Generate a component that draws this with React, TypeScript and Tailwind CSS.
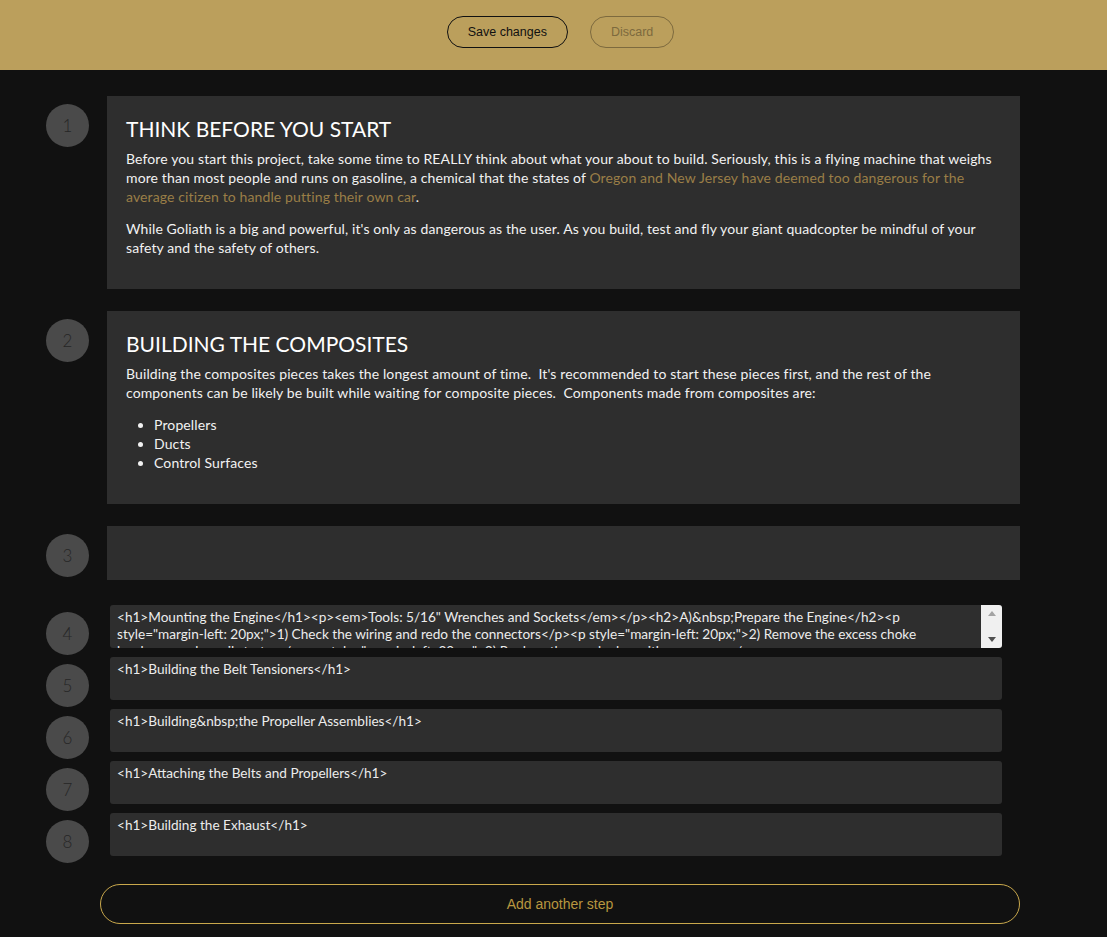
import React from 'react';

const font = { fontFamily: 'Lato, "Noto Sans", sans-serif' };

function Circle({ n }: { n: number }) {
  return (
    <div className="flex h-[43px] w-[43px] shrink-0 items-center justify-center rounded-full bg-[#4a4a4a] text-[17px] font-light text-[#262626]">
      {n}
    </div>
  );
}

function CardRow({ n, children, empty }: { n: number; children?: React.ReactNode; empty?: boolean }) {
  return (
    <div className="flex items-start gap-[18px]">
      <div className="mt-2">
        <Circle n={n} />
      </div>
      <div
        className={
          empty
            ? 'h-[54px] flex-1 bg-[#2e2e2e]'
            : 'flex-1 bg-[#2e2e2e] px-[19px] pt-[19px] pb-[32px] text-[14px] leading-[19px] tracking-[0.12px] text-[#f2f2f2]'
        }
      >
        {children}
      </div>
    </div>
  );
}

function StepRow({ n, text, scroll }: { n: number; text: string; scroll?: boolean }) {
  return (
    <div className="flex h-[43px] items-start gap-[21px] pr-[18px]">
      <div className="mt-[7px]">
        <Circle n={n} />
      </div>
      <div className="flex h-[43px] flex-1 overflow-hidden rounded-[3px] bg-[#2e2e2e]">
        <div className="flex-1 overflow-hidden px-[7px] pt-[4px] text-[13.6px] leading-[17px] text-[#ececec]">
          {text}
        </div>
        {scroll && (
          <div className="flex h-[43px] w-[21px] flex-col items-center justify-between bg-[#f0f0f0] py-[6px]">
            <svg width="8" height="5" viewBox="0 0 8 5">
              <path d="M0 5 L4 0 L8 5 Z" fill="#a3a3a3" />
            </svg>
            <svg width="8" height="5" viewBox="0 0 8 5">
              <path d="M0 0 L8 0 L4 5 Z" fill="#505050" />
            </svg>
          </div>
        )}
      </div>
    </div>
  );
}

export default function App() {
  return (
    <div className="min-h-[937px] w-full bg-[#111111]" style={font}>
      <div
        className="flex h-[70px] items-start justify-center gap-[22px] bg-[#bb9f5c] pt-4 pl-[14px]"
        style={{ fontFamily: '"Liberation Sans", Arial, sans-serif' }}
      >
        <button className="h-8 rounded-full border border-[#111] px-[20px] text-[12.5px] text-[#111]">Save changes</button>
        <button className="h-8 rounded-full border border-[#7d6a3e] px-[20px] text-[12.5px] text-[#7d6a3e]">Discard</button>
      </div>

      <div className="flex w-[1020px] flex-col pt-[26px] pl-[46px]">
        <div className="flex flex-col gap-[22px]">
          <CardRow n={1}>
            <h1 className="mb-[8px] pt-[2px] text-[21px] leading-[24px] tracking-normal text-white">THINK BEFORE YOU START</h1>
            <p>
              Before you start this project, take some time to REALLY think about what your about to build. Seriously, this is a flying machine that weighs more than most people and runs on gasoline, a chemical that the states of{' '}
              <span className="text-[#9a7e47]">Oregon and New Jersey have deemed too dangerous for the average citizen to handle putting their own car</span>.
            </p>
            <p className="mt-[13px]">
              While Goliath is a big and powerful, it's only as dangerous as the user. As you build, test and fly your giant quadcopter be mindful of your safety and the safety of others.
            </p>
          </CardRow>
          <CardRow n={2}>
            <h1 className="mb-[8px] pt-[2px] text-[21px] leading-[24px] tracking-normal text-white">BUILDING THE COMPOSITES</h1>
            <p>
              Building the composites pieces takes the longest amount of time.&nbsp; It's recommended to start these pieces first, and the rest of the components can be likely be built while waiting for composite pieces.&nbsp; Components made from composites are:
            </p>
            <ul className="mt-[13px] list-disc pl-[28px]">
              <li>Propellers</li>
              <li>Ducts</li>
              <li>Control Surfaces</li>
            </ul>
          </CardRow>
          <CardRow n={3} empty />
        </div>

        <div className="mt-[25px] flex flex-col gap-[9px]">
          <StepRow
            n={4}
            scroll
            text={`<h1>Mounting the Engine</h1><p><em>Tools: 5/16" Wrenches and Sockets</em></p><h2>A)&nbsp;Prepare the Engine</h2><p style="margin-left: 20px;">1) Check the wiring and redo the connectors</p><p style="margin-left: 20px;">2) Remove the excess choke hardware and recoil starter</p><p style="margin-left: 20px;">3) Replace the spark plug with a new one</p>`}
          />
          <StepRow n={5} text={'<h1>Building the Belt Tensioners</h1>'} />
          <StepRow n={6} text={'<h1>Building&nbsp;the Propeller Assemblies</h1>'} />
          <StepRow n={7} text={'<h1>Attaching the Belts and Propellers</h1>'} />
          <StepRow n={8} text={'<h1>Building the Exhaust</h1>'} />
        </div>

        <div className="mt-[28px] pl-[54px]">
          <button
            className="h-10 w-full rounded-full border border-[#c9a84c] text-[14px] text-[#b8963f]"
            style={{ fontFamily: '"Liberation Sans", Arial, sans-serif' }}
          >
            Add another step
          </button>
        </div>
      </div>
    </div>
  );
}
